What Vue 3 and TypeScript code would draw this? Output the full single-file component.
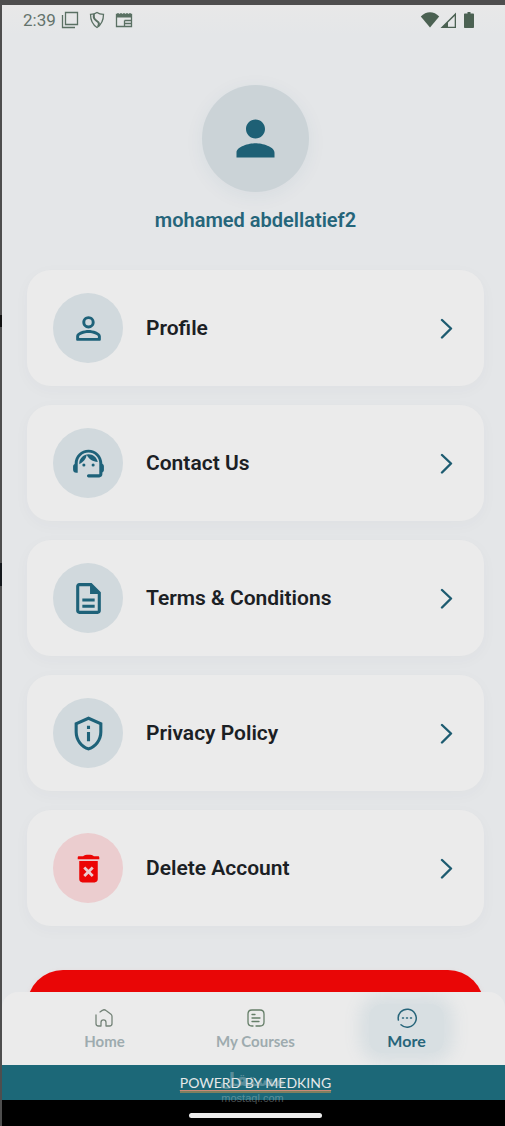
<script setup lang="ts">
type IconName = 'profile' | 'support' | 'document' | 'privacy' | 'delete'

interface MenuItem {
  label: string
  icon: IconName
  danger?: boolean
}

const items: MenuItem[] = [
  { label: 'Profile', icon: 'profile' },
  { label: 'Contact Us', icon: 'support' },
  { label: 'Terms & Conditions', icon: 'document' },
  { label: 'Privacy Policy', icon: 'privacy' },
  { label: 'Delete Account', icon: 'delete', danger: true },
]

const iconPaths: Record<IconName, string> = {
  profile:
    'M12 5.9a2.1 2.1 0 1 1 0 4.2 2.1 2.1 0 0 1 0-4.2m0 9c2.97 0 6.1 1.46 6.1 2.1v1.1H5.9V17c0-.64 3.13-2.1 6.1-2.1M12 4C9.79 4 8 5.79 8 8s1.79 4 4 4 4-1.79 4-4-1.79-4-4-4zm0 9c-2.67 0-8 1.34-8 4v2.2c0 .5.3.8.8.8h14.4c.5 0 .8-.3.8-.8V17c0-2.66-5.33-4-8-4z',
  support:
    'M21 12.22C21 6.73 16.74 3 12 3c-4.69 0-9 3.65-9 9.28-.6.34-1 .98-1 1.72v2c0 1.1.9 2 2 2h1v-6.1c0-3.87 3.13-7 7-7s7 3.13 7 7V19h-7a1 1 0 0 0 0 2h7c1.1 0 2-.9 2-2v-1.22c.59-.31 1-.92 1-1.64v-2.3c0-.7-.41-1.31-1-1.62zM8 13a1 1 0 1 0 2 0 1 1 0 1 0-2 0zm6 0a1 1 0 1 0 2 0 1 1 0 1 0-2 0zm4-1.97C17.52 8.18 15.04 6 12.05 6c-3.03 0-6.29 2.51-6.03 6.45 2.47-1.01 4.33-3.21 4.86-5.89 1.31 2.63 4 4.44 7.12 4.47z',
  document:
    'M8 16h8v2H8zm0-4h8v2H8zm6-10H6c-1.1 0-2 .9-2 2v16c0 1.1.89 2 1.99 2H18c1.1 0 2-.9 2-2V8l-6-6zm4 18H6V4h7v5h5v11z',
  privacy:
    'M12 1L3 5v6c0 5.55 3.84 10.74 9 12 5.16-1.26 9-6.45 9-12V5l-9-4zm7 10c0 4.52-2.98 8.69-7 9.93-4.02-1.24-7-5.41-7-9.93V6.3l7-3.11 7 3.11V11zM11 7h2v2h-2zm0 4h2v6h-2z',
  delete:
    'M5.8 4h2.7c.8-.7 2-1 3.5-1s2.7.3 3.5 1h2.7c.5 0 .8.3.8.8V6H5V4.800c0-.5.3-.8.8-.8zM6 7.200h12V19c0 1.100-.9 2-2 2H8c-1.100 0-2-.9-2-2zM9.900 10.700l-1.300 1.300 2.100 2.100-2.100 2.100 1.300 1.300 2.100-2.100 2.100 2.100 1.300-1.300-2.100-2.100 2.100-2.100-1.300-1.300-2.100 2.100z',
}
</script>

<template>
  <div class="device">
    <div class="screen">
      <header class="status">
        <div class="status-group">
          <span class="clock">2:39</span>
          <svg class="s-icon" viewBox="0 0 18 18" aria-hidden="true">
            <path d="M4.500 1.500h12v12h-12zM1.500 4v12.500H14" />
          </svg>
          <svg class="s-icon" viewBox="0 0 18 18" aria-hidden="true">
            <path d="M9 1.500c2 1.500 4 1.800 6.500 1.800 0 6-1.500 10-6.500 13.200C4 13.300 2.500 9.300 2.500 3.300 5 3.300 7 3 9 1.500z" />
            <path d="M6 3c-1 5 1 5.500 3.500 7.500C11.500 12 11 14 10 15.500" stroke-width="2" />
          </svg>
          <svg class="s-icon" viewBox="0 0 18 18" aria-hidden="true">
            <path d="M1.500 3.500h15v12h-15zM9.500 9.500H16M9.500 9.500V15M9.500 12.500H16" />
            <path d="M1.500 5h15" stroke-width="3" />
            <path d="M3 2v2M6 2v2M9 2v2M12 2v2M15 2v2" />
          </svg>
        </div>
        <div class="status-group tight">
          <svg class="s-fill" viewBox="0 0 20 18" aria-hidden="true">
            <path d="M10 16.500L.8 5.500C6-.2 14-.2 19.200 5.500z" />
          </svg>
          <svg class="s-fill" viewBox="0 0 20 18" aria-hidden="true">
            <path d="M16 1.500V17H.5zM14.700 5L8 11.500v4.200h6.700z" fill-rule="evenodd" />
          </svg>
          <svg class="s-fill" viewBox="0 0 20 18" aria-hidden="true">
            <path d="M7.500 1h3v1.500H13c.5 0 1 .4 1 1V16c0 .6-.5 1-1 1H5c-.6 0-1-.4-1-1V3.500c0-.6.4-1 1-1h2.500z" />
          </svg>
        </div>
      </header>

      <main class="content">
        <section class="user">
          <div class="avatar">
            <svg viewBox="0 0 24 24" aria-hidden="true">
              <path d="M12 12c2.210 0 4-1.790 4-4s-1.790-4-4-4-4 1.790-4 4 1.790 4 4 4zm0 2c-2.670 0-8 1.340-8 4v2h16v-2c0-2.660-5.330-4-8-4z" />
            </svg>
          </div>
          <h1 class="name">mohamed abdellatief2</h1>
        </section>

        <div class="menu">
          <button v-for="item in items" :key="item.label" type="button" class="card">
            <span class="badge" :class="{ danger: item.danger }">
              <svg viewBox="0 0 24 24" aria-hidden="true">
                <path :d="iconPaths[item.icon]" fill-rule="evenodd" />
              </svg>
            </span>
            <span class="label">{{ item.label }}</span>
            <svg class="chevron" viewBox="0 0 14 22" aria-hidden="true">
              <path d="M3 3l9 8.500L3 20.500" />
            </svg>
          </button>
        </div>

        <button type="button" class="logout" aria-label="Log out"></button>
      </main>

      <nav class="tabs">
        <a href="#home" class="tab">
          <svg viewBox="0 0 20 20" aria-hidden="true">
            <path d="M2 7v8.500C2 17.500 3 18 4.500 18H7v-3.500c0-3.500 5-3.500 5 0V18h3.500c1.500 0 2.500-.8 2.500-2.500V8.500c0-1-.3-1.700-1-2.300L12 2.500c-1.200-1-2.500-1-3.700-.1L6 4" />
          </svg>
          <span>Home</span>
        </a>
        <a href="#courses" class="tab courses">
          <svg viewBox="0 0 20 20" aria-hidden="true">
            <path d="M7 18H6c-3 0-4-1-4-4V6c0-3 1-4 4-4h8c3 0 4 1 4 4v8c0 3-1 4-4 4h-4M6 6.500h3M6 10h8M6 13.500h7" />
          </svg>
          <span>My Courses</span>
        </a>
        <a href="#more" class="tab active" aria-current="page">
          <svg viewBox="0 0 20 20" aria-hidden="true">
            <path d="M1.400 12A9 9 0 1 1 4 16.700M5.500 10h1M9.500 10h1M13.500 10h1" />
          </svg>
          <span>More</span>
        </a>
      </nav>

      <footer class="brand">
        <a href="#medking">POWERD BY MEDKING</a>
        <div class="mark" aria-hidden="true">
          <span class="mark-logo" lang="ar">مستقل</span>
          <span class="mark-url">mostaql.com</span>
        </div>
      </footer>
      <div class="system"><span class="handle"></span></div>
    </div>
  </div>
</template>

<style>
body {
  margin: 0;
}
</style>

<style scoped>
.device {
  box-sizing: border-box;
  height: 100vh;
  padding: 5px 0 0 2px;
  background: linear-gradient(
    #4e4e4e 28%,
    #111 28%,
    #111 29%,
    #4e4e4e 29%,
    #4e4e4e 50%,
    #14181c 50%,
    #14181c 52%,
    #4e4e4e 52%
  );
  font-family: Roboto, 'Liberation Sans', sans-serif;
}
.screen {
  display: flex;
  flex-direction: column;
  height: 100%;
  background: #e4e6e8;
}
.status {
  display: flex;
  flex: none;
  align-items: center;
  justify-content: space-between;
  height: 30px;
  padding: 0 25px 0 21px;
  color: #5a7063;
  background: linear-gradient(#e8e8e8, #e4e6e8);
}
.status-group {
  display: flex;
  align-items: center;
  gap: 9px;
}
.status-group.tight {
  gap: 0;
}
.clock {
  margin-right: -4px;
  font-size: 17px;
  line-height: 20px;
  color: #64736c;
}
.s-icon {
  width: 18px;
  height: 18px;
  fill: none;
  stroke: currentColor;
  stroke-width: 1.3;
}
.s-fill {
  width: 20px;
  height: 18px;
  fill: #4b6152;
}
.content {
  display: flex;
  flex: 1;
  flex-direction: column;
  min-height: 0;
  overflow: hidden;
  padding: 50px 21px 0 25px;
}
.user {
  display: flex;
  flex: none;
  flex-direction: column;
  align-items: center;
  gap: 16px;
}
.avatar {
  display: grid;
  place-items: center;
  width: 107px;
  height: 107px;
  border-radius: 50%;
  background: #cbd3d7;
  box-shadow: 0 4px 20px rgba(40, 90, 120, 0.06);
}
.avatar svg {
  width: 57px;
  height: 57px;
  fill: #1e6075;
}
.name {
  margin: 0;
  font-size: 20px;
  line-height: 24px;
  font-weight: 600;
  color: #25657a;
}
.menu {
  display: flex;
  flex: none;
  flex-direction: column;
  gap: 19px;
  margin-top: 38px;
}
.card {
  display: flex;
  align-items: center;
  gap: 23px;
  width: 100%;
  height: 116px;
  padding: 0 31px 0 26px;
  border: 0;
  border-radius: 24px;
  background: #ebebeb;
  box-shadow: 0 4px 16px rgba(50, 70, 100, 0.03);
  font: inherit;
  text-align: left;
}
.badge {
  display: grid;
  flex: none;
  place-items: center;
  width: 70px;
  height: 70px;
  border-radius: 50%;
  background: #d1d9dd;
}
.badge svg {
  width: 37px;
  height: 37px;
  fill: #1e6279;
}
.badge.danger {
  background: #ebcdcf;
}
.badge.danger svg {
  fill: #ec0505;
}
.label {
  flex: 1;
  font-size: 21px;
  line-height: 24px;
  font-weight: 600;
  color: #1b2024;
}
.chevron {
  flex: none;
  width: 14px;
  height: 22px;
  fill: none;
  stroke: #1d5b70;
  stroke-width: 2.4;
  stroke-linecap: round;
  stroke-linejoin: round;
}
.logout {
  flex: none;
  height: 72px;
  margin-top: 44px;
  padding: 0;
  border: 0;
  border-radius: 36px;
  background: #e90606;
  box-shadow: 0 2px 6px rgba(233, 6, 6, 0.08);
}
.tabs {
  display: grid;
  flex: none;
  grid-template-columns: repeat(3, 1fr);
  height: 73px;
  padding: 0 23px 0 27px;
  border-radius: 16px 16px 0 0;
  background: #ebebeb;
  overflow: hidden;
}
.tab {
  display: flex;
  flex-direction: column;
  align-items: center;
  align-self: center;
  justify-self: center;
  gap: 5px;
  font-family: Lato, 'Open Sans', sans-serif;
  font-size: 15px;
  line-height: 16px;
  font-weight: 700;
  color: #9eabaf;
  text-decoration: none;
}
.tab svg {
  width: 20px;
  height: 20px;
  fill: none;
  stroke: #758479;
  stroke-width: 1.3;
  stroke-linecap: round;
  stroke-linejoin: round;
}
.tab.courses svg {
  stroke: #657e68;
}
.tab.active {
  padding: 4px 18px;
  border-radius: 14px;
  background: #d8dfe2;
  box-shadow: 0 0 16px 10px #d8dfe2;
  font-size: 16px;
  color: #27657a;
}
.tab.active svg {
  stroke: #27657a;
  stroke-width: 1.5;
}
.brand {
  position: relative;
  display: flex;
  flex: none;
  align-items: center;
  justify-content: center;
  height: 35px;
  padding: 2px 0 0 4px;
  box-sizing: border-box;
  background: #1c6878;
  font-family: Lato, 'Open Sans', sans-serif;
  font-size: 14px;
  line-height: 16px;
}
.brand a {
  border-bottom: 2px solid #7d8060;
  color: #e6e9e9;
  text-decoration: underline;
  text-decoration-color: #c98a77;
  text-underline-offset: 2px;
}
.mark {
  position: absolute;
  inset: 5px 0 auto;
  display: flex;
  flex-direction: column;
  align-items: center;
  padding-right: 2px;
  color: rgba(190, 205, 210, 0.4);
  pointer-events: none;
}
.mark-logo {
  font-family: 'DejaVu Sans', sans-serif;
  font-size: 18px;
  line-height: 20px;
  font-weight: 700;
}
.mark-url {
  font-family: 'Liberation Sans', sans-serif;
  font-size: 11px;
  line-height: 16px;
}
.system {
  display: flex;
  flex: none;
  align-items: center;
  justify-content: center;
  height: 26px;
  padding: 4px 0 0 4px;
  box-sizing: border-box;
  background: #000;
}
.handle {
  width: 133px;
  height: 5px;
  border-radius: 3px;
  background: #ececec;
}
</style>
